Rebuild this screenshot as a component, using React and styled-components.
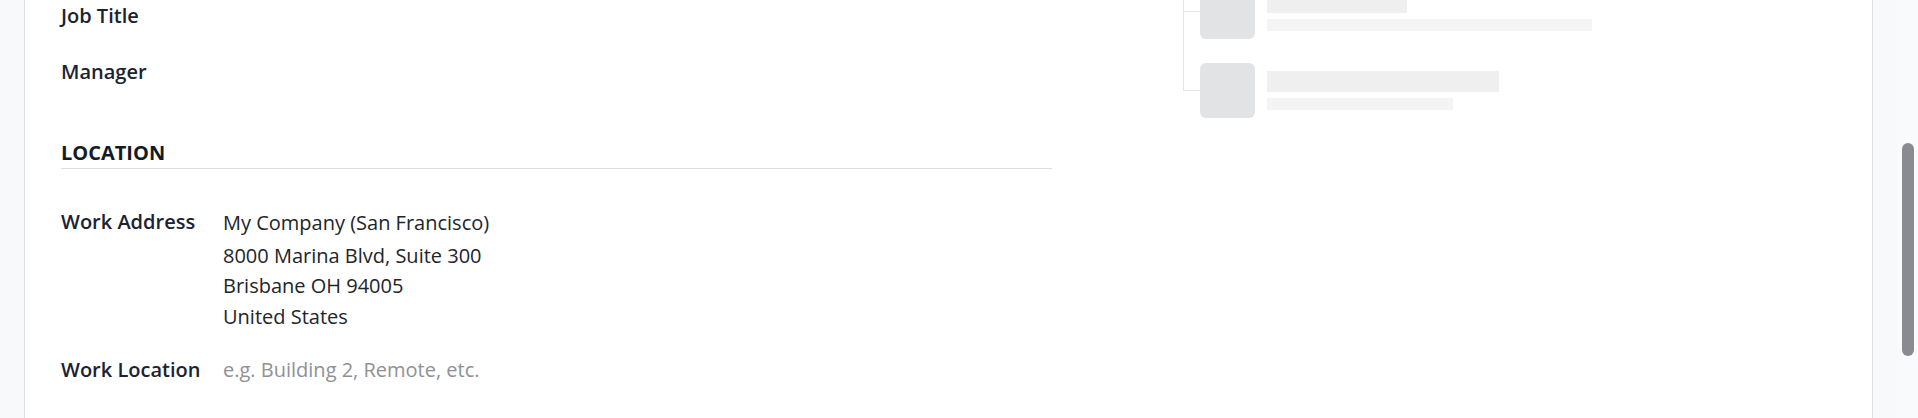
import React from "react";
import styled, { createGlobalStyle } from "styled-components";

const Global = createGlobalStyle`
  html, body { margin: 0; padding: 0; }
  body {
    background: #f8f9fa;
    font-family: "Open Sans", "Noto Sans", "Liberation Sans", sans-serif;
    font-size: 20px;
    color: #212529;
    overflow: hidden;
  }
`;

const Page = styled.div`
  display: flex;
  height: 418px;
  width: 1918px;
  overflow: hidden;
`;

const Gutter = styled.div`
  width: ${(p) => p.$w}px;
  flex: none;
  background: #f8f9fa;
`;

const Sheet = styled.main`
  flex: 1;
  background: #ffffff;
  border-left: 1px solid #dcdee1;
  border-right: 1px solid #dcdee1;
  padding: 0 0 0 36px;
  display: grid;
  grid-template-columns: 991px 1fr;
  column-gap: 131px;
  align-items: start;
  overflow: hidden;
`;

const FormColumn = styled.section`
  display: flex;
  flex-direction: column;
  padding-top: 2.2px;
`;

const Row = styled.div`
  display: grid;
  grid-template-columns: 162px 1fr;
  line-height: 27px;
  min-height: ${(p) => p.$h || 27}px;
  margin-bottom: ${(p) => p.$mb || 0}px;
`;

const Label = styled.div`
  font-weight: 600;
  color: #1b2230;
  white-space: nowrap;
`;

const Value = styled.div`
  color: #212529;
`;

const Placeholder = styled.div`
  color: #8e9196;
`;

const AddressLine = styled.div`
  line-height: ${(p) => (p.$first ? "27px" : "30.5px")};
  margin-bottom: ${(p) => (p.$first ? "5.2px" : "0")};
  padding-top: ${(p) => (p.$first ? "1px" : "0")};
`;

const SectionTitle = styled.h3`
  margin: 25.5px 0 39px;
  font-size: 20px;
  font-weight: 700;
  line-height: 27px;
  text-transform: uppercase;
  color: #151b26;
  padding-bottom: 2px;
  border-bottom: 1px solid #dcdee1;
`;

const OrgChart = styled.ul`
  list-style: none;
  margin: -16px 0 0 0;
  padding: 0;
  width: 660px;
`;

const OrgItem = styled.li`
  position: relative;
  display: flex;
  gap: 12px;
  padding: 0 0 ${(p) => (p.$last ? 0 : 24)}px 17px;

  &::before {
    content: "";
    position: absolute;
    left: 0;
    top: -40px;
    height: ${(p) => (p.$last ? "68px" : "calc(100% + 40px)")};
    border-left: 1px solid #e3e4e6;
  }
  &::after {
    content: "";
    position: absolute;
    left: 0;
    top: 27px;
    width: 17px;
    border-top: 1px solid #e3e4e6;
  }
`;

const Avatar = styled.div`
  width: 55px;
  height: 55px;
  border-radius: 6px;
  background: #e2e3e5;
  flex: none;
`;

const Bars = styled.div`
  display: flex;
  flex-direction: column;
  padding-top: 8px;
  gap: 6px;
`;

const Bar = styled.div`
  height: ${(p) => p.$h}px;
  background: ${(p) => p.$c};
`;

const ScrollTrack = styled.div`
  width: 21px;
  flex: none;
  background: #f9fafb;
  padding: 143px 4px 0 5px;
  box-sizing: border-box;
`;

const Thumb = styled.div`
  width: 12px;
  height: 213px;
  border-radius: 6px;
  background: #8a8b90;
`;

const chart = [
  { title: 140, sub: 325 },
  { title: 232, sub: 186 },
];

export default function App() {
  return (
    <>
      <Global />
      <Page>
        <Gutter $w={24} />
        <Sheet>
          <FormColumn>
            <Row $h={55.6}>
              <Label>Job Title</Label>
              <Value />
            </Row>
            <Row $h={55.5}>
              <Label>Manager</Label>
              <Value />
            </Row>
            <SectionTitle>Location</SectionTitle>
            <Row $mb={23.3}>
              <Label>Work Address</Label>
              <Value>
                <AddressLine $first>My Company (San Francisco)</AddressLine>
                <AddressLine>8000 Marina Blvd, Suite 300</AddressLine>
                <AddressLine>Brisbane OH 94005</AddressLine>
                <AddressLine>United States</AddressLine>
              </Value>
            </Row>
            <Row>
              <Label>Work Location</Label>
              <Placeholder>e.g. Building 2, Remote, etc.</Placeholder>
            </Row>
          </FormColumn>
          <OrgChart>
            {chart.map((c, i) => (
              <OrgItem key={i} $last={i === chart.length - 1}>
                <Avatar />
                <Bars>
                  <Bar $h={21} $c="#efefef" style={{ width: c.title }} />
                  <Bar $h={12} $c="#f4f4f4" style={{ width: c.sub }} />
                </Bars>
              </OrgItem>
            ))}
          </OrgChart>
        </Sheet>
        <Gutter $w={24} />
        <ScrollTrack>
          <Thumb />
        </ScrollTrack>
      </Page>
    </>
  );
}
